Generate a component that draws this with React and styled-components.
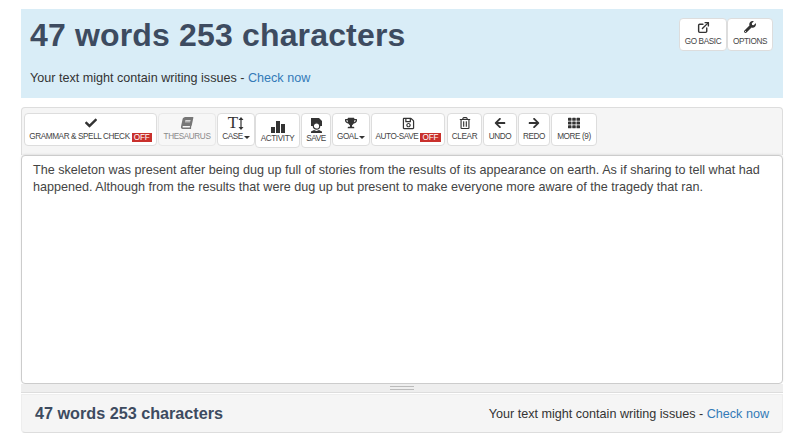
import React from 'react';
import styled, {createGlobalStyle} from 'styled-components';
import {FaCheck, FaBook, FaTrophy, FaRegSave, FaRegTrashAlt, FaArrowLeft, FaArrowRight, FaTh, FaWrench} from 'react-icons/fa';
import {FiExternalLink} from 'react-icons/fi';

const Global = createGlobalStyle`
  html, body { margin: 0; padding: 0; background: #fff; overflow: hidden; }
  body { font-family: "Liberation Sans", Arial, sans-serif; color: #333; }
  * { box-sizing: border-box; }
`;

const Page = styled.div`
  width: 793px;
  height: 446px;
  padding: 9px 10px 0 21px;
  display: flex;
  flex-direction: column;
`;

const Hero = styled.div`
  height: 89px;
  background: #d9edf7;
  padding: 9px 10px 0 9px;
  display: flex;
  justify-content: space-between;
  align-items: flex-start;
`;

const HeroText = styled.div`
  display: flex;
  flex-direction: column;
`;

const Count = styled.h1`
  margin: 0;
  font-size: 32px;
  line-height: 34px;
  font-weight: 700;
  letter-spacing: 0.16px;
  color: #3d4b60;
`;

const Issue = styled.div`
  margin-top: 16px;
  font-size: 12.6px;
  line-height: 20px;
  color: #333;
`;

const Link = styled.a`
  color: #337ab7;
  text-decoration: none;
`;

const HeroButtons = styled.div`
  display: flex;
`;

const Panel = styled.div`
  margin-top: 9px;
  height: 48px;
  background: #f5f5f5;
  border: 1px solid #ddd;
  border-bottom: 0;
  border-radius: 4px 4px 0 0;
  padding: 5px 2px 0;
  display: flex;
  align-items: flex-start;
`;

const Button = styled.div`
  flex: none;
  width: ${p => p.$w}px;
  height: ${p => p.$h || 33}px;
  margin-right: ${p => p.$gap === undefined ? 1 : p.$gap}px;
  background: ${p => p.$muted ? '#f7f7f7' : '#fff'};
  border: 1px solid ${p => p.$muted ? '#e8e8e8' : '#ddd'};
  border-radius: 4px;
  display: flex;
  flex-direction: column;
  align-items: center;
  justify-content: flex-start;
  padding-top: ${p => p.$top === undefined ? 2 : p.$top}px;
  color: ${p => p.$muted ? '#8a8a8a' : '#444'};
`;

const Icon = styled.div`
  height: 14px;
  font-size: 13px;
  line-height: 14px;
  display: flex;
  align-items: center;
  justify-content: center;
  color: ${p => p.$muted ? '#777' : '#333'};
`;

const Label = styled.div`
  margin-top: ${p => p.$mt === undefined ? 2 : p.$mt}px;
  font-size: 8.2px;
  line-height: 10px;
  letter-spacing: -0.4px;
  white-space: nowrap;
  display: flex;
  align-items: center;
`;

const Off = styled.span`
  margin-left: 2px;
  background: #c9302c;
  color: #fff;
  font-size: 8.2px;
  line-height: 9px;
  letter-spacing: -0.1px;
  padding: 0 2px;
`;

const Caret = styled.span`
  margin-left: 1px;
  border-top: 3px solid #333;
  border-left: 3px solid transparent;
  border-right: 3px solid transparent;
`;

const CaseT = styled.span`
  font-family: "Liberation Serif", serif;
  font-size: 17px;
  line-height: 14px;
  color: #333;
`;

const TiltedBook = styled(FaBook)`
  transform: skewX(-12deg);
`;

const Editor = styled.div`
  height: 229px;
  background: #fff;
  border: 1px solid #ccc;
  border-radius: 4px;
  box-shadow: 0 -1px 2px rgba(0,0,0,0.08);
  padding: 6px 11px;
  font-size: 12.6px;
  line-height: 17px;
  color: #444;
`;

const Grip = styled.div`
  height: 9px;
  background: #eee;
  border-bottom: 1px solid #ddd;
  display: flex;
  align-items: center;
  justify-content: center;
`;

const GripLines = styled.div`
  width: 24px;
  height: 4px;
  border-top: 1px solid #bbb;
  border-bottom: 1px solid #bbb;
`;

const Footer = styled.div`
  margin-top: 1px;
  height: 39px;
  background: #f5f5f5;
  border: 1px solid #eee;
  border-bottom: 1px solid #ddd;
  border-radius: 0 0 4px 4px;
  padding: 0 13px;
  display: flex;
  align-items: center;
  justify-content: space-between;
`;

const FootCount = styled.div`
  font-size: 16.2px;
  font-weight: 700;
  color: #3d4b60;
`;

const FootIssue = styled.div`
  font-size: 12.6px;
  color: #333;
`;

const BarsIcon = () => (
    <svg width="14" height="13" viewBox="0 0 14 13">
        <path fill="#333" d="M0 7h4v6H0zM5 1h4v12H5zM10 4h4v9h-4z"/>
    </svg>
);

const ReviewIcon = () => (
    <svg width="13" height="15" viewBox="0 0 13 15">
        <path fill="#333" d="M1 0h8l3 3v5H1z"/>
        <circle cx="6.500" cy="8" r="3.200" fill="#fff" stroke="#333" strokeWidth="1.200"/>
        <path fill="#333" d="M1 15v-1.500l3-1.500 2.500 1 2.500-1 3 1.500V15z"/>
    </svg>
);

const CaseIcon = () => (
    <>
        <CaseT>T</CaseT>
        <svg width="6" height="13" viewBox="0 0 6 13">
            <path fill="#333" d="M3 0l2.500 3H3.600v7H5.500L3 13 .5 10h1.900V3H.5z"/>
        </svg>
    </>
);

const tools = [
    {w: 133, icon: <FaCheck size={12}/>, label: 'GRAMMAR & SPELL CHECK', off: true},
    {w: 58, icon: <TiltedBook size={12}/>, label: 'THESAURUS', muted: true},
    {w: 38, gap: 0, icon: <CaseIcon/>, label: 'CASE', caret: true},
    {w: 45, h: 35, icon: <BarsIcon/>, label: 'ACTIVITY', mt: 1, top: 5},
    {w: 30, h: 35, icon: <ReviewIcon/>, label: 'SAVE', top: 4},
    {w: 38, icon: <FaTrophy size={12}/>, label: 'GOAL', caret: true},
    {w: 74, gap: 2, icon: <FaRegSave size={13}/>, label: 'AUTO-SAVE', off: true},
    {w: 35, icon: <FaRegTrashAlt size={12}/>, label: 'CLEAR'},
    {w: 34, icon: <FaArrowLeft size={12}/>, label: 'UNDO'},
    {w: 32, icon: <FaArrowRight size={12}/>, label: 'REDO'},
    {w: 46, icon: <FaTh size={12}/>, label: 'MORE (9)'},
];

export default function App() {
    return (
        <Page>
            <Global/>
            <Hero>
                <HeroText>
                    <Count>47 words 253 characters</Count>
                    <Issue>Your text might contain writing issues - <Link>Check now</Link></Issue>
                </HeroText>
                <HeroButtons>
                    <Button $w={48} $gap={0} $top={1}>
                        <Icon><FiExternalLink size={13} strokeWidth={2.6}/></Icon>
                        <Label $mt={3}>GO BASIC</Label>
                    </Button>
                    <Button $w={46} $gap={0} $top={1}>
                        <Icon><FaWrench size={12}/></Icon>
                        <Label $mt={3}>OPTIONS</Label>
                    </Button>
                </HeroButtons>
            </Hero>

            <Panel>
                {tools.map(t => (
                    <Button key={t.label} $w={t.w} $h={t.h} $gap={t.gap} $muted={t.muted} $top={t.top}>
                        <Icon $muted={t.muted}>{t.icon}</Icon>
                        <Label $mt={t.mt}>
                            {t.label}
                            {t.off && <Off>OFF</Off>}
                            {t.caret && <Caret/>}
                        </Label>
                    </Button>
                ))}
            </Panel>

            <Editor>
                The skeleton was present after being dug up full of stories from the results of its appearance on earth. As if sharing to tell what had happened. Although from the results that were dug up but present to make everyone more aware of the tragedy that ran.
            </Editor>
            <Grip><GripLines/></Grip>
            <Footer>
                <FootCount>47 words 253 characters</FootCount>
                <FootIssue>Your text might contain writing issues - <Link>Check now</Link></FootIssue>
            </Footer>
        </Page>
    );
}
